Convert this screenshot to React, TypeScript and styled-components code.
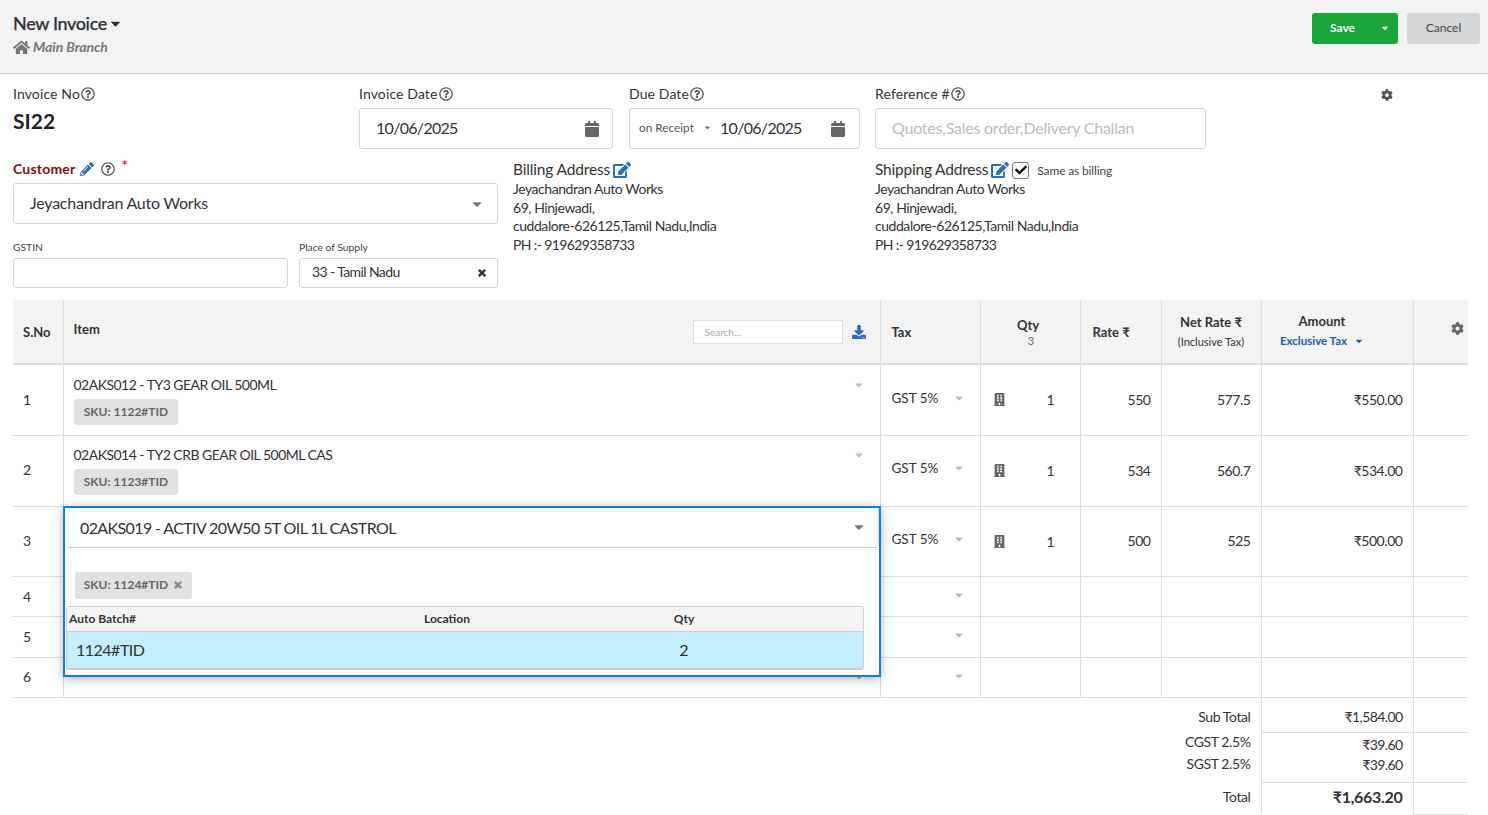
import React from "react";
import styled, { createGlobalStyle } from "styled-components";
import {
  FaBuilding,
  FaCalendar,
  FaCaretDown,
  FaCheck,
  FaCog,
  FaDownload,
  FaEdit,
  FaHome,
  FaPencilAlt,
  FaRegQuestionCircle,
  FaTimes,
} from "react-icons/fa";

const GlobalStyle = createGlobalStyle`
  html, body {
    margin: 0;
    padding: 0;
    background: #fff;
    color: #333;
    font-family: Lato, "Open Sans", sans-serif;
    font-size: 14px;
  }
  * { box-sizing: border-box; }
`;

const rows = [
  { no: 1, item: "02AKS012 - TY3 GEAR OIL 500ML", sku: "SKU: 1122#TID", rate: "550", net: "577.5", amount: "₹550.00", height: 71 },
  { no: 2, item: "02AKS014 - TY2 CRB GEAR OIL 500ML CAS", sku: "SKU: 1123#TID", rate: "534", net: "560.7", amount: "₹534.00", height: 71 },
  { no: 3, rate: "500", net: "525", amount: "₹500.00", height: 70 },
  { no: 4, height: 40 },
  { no: 5, height: 41 },
  { no: 6, height: 40 },
];

const address = ["Jeyachandran Auto Works", "69, Hinjewadi,", "cuddalore-626125,Tamil Nadu,India", "PH :- 919629358733"];

const App = () => {
  return (
    <Page>
      <GlobalStyle />
      <TopBar>
        <div>
          <Title>
            <span>New Invoice</span>
            <FaCaretDown size={15} />
          </Title>
          <Branch>
            <FaHome size={17} />
            Main Branch
          </Branch>
        </div>
        <TopActions>
          <SaveButton>
            <span>Save</span>
            <FaCaretDown size={10} />
          </SaveButton>
          <CancelButton>Cancel</CancelButton>
        </TopActions>
      </TopBar>

      <Content>
        <FirstRow>
          <Field $width={346}>
            <Label>
              Invoice No
              <HelpIcon />
            </Label>
            <InvoiceNo>SI22</InvoiceNo>
          </Field>
          <Field $width={270}>
            <Label>
              Invoice Date
              <HelpIcon />
            </Label>
            <BigInput $width={254}>
              <DateText>10/06/2025</DateText>
              <CalendarIcon />
            </BigInput>
          </Field>
          <Field $width={246}>
            <Label>
              Due Date
              <HelpIcon />
            </Label>
            <DueInput>
              <DueTerm>
                on Receipt <FaCaretDown size={9} />
              </DueTerm>
              <DateText>10/06/2025</DateText>
              <CalendarIcon />
            </DueInput>
          </Field>
          <Field $width={512}>
            <Label>
              Reference #
              <HelpIcon />
            </Label>
            <BigInput $width={331}>
              <Placeholder>Quotes,Sales order,Delivery Challan</Placeholder>
            </BigInput>
          </Field>
          <FormGear>
            <FaCog size={12} />
          </FormGear>
        </FirstRow>

        <SecondRow>
          <CustomerColumn>
            <CustomerLabel>
              Customer
              <FaPencilAlt size={14} color="#2d6db8" />
              <HelpIcon />
              <Required>*</Required>
            </CustomerLabel>
            <CustomerSelect>
              <span>Jeyachandran Auto Works</span>
              <FaCaretDown size={14} color="#777" />
            </CustomerSelect>
            <SubFields>
              <div>
                <SmallLabel>GSTIN</SmallLabel>
                <SmallInput $width={275} />
              </div>
              <div>
                <SmallLabel>Place of Supply</SmallLabel>
                <SmallInput $width={199}>
                  <span>33 - Tamil Nadu</span>
                  <ChunkyTimes size={10} color="#333" />
                </SmallInput>
              </div>
            </SubFields>
          </CustomerColumn>

          <AddressColumn $width={362}>
            <AddressTitle>
              Billing Address
              <FaEdit size={18} color="#2d6db8" />
            </AddressTitle>
            {address.map((line) => (
              <AddressLine key={line}>{line}</AddressLine>
            ))}
          </AddressColumn>

          <AddressColumn $width={400}>
            <ShippingTitle>
              Shipping Address
              <FaEdit size={18} color="#2d6db8" />
              <CheckBox>
                <FaCheck size={12} />
              </CheckBox>
              <SameAs>Same as billing</SameAs>
            </ShippingTitle>
            {address.map((line) => (
              <AddressLine key={line}>{line}</AddressLine>
            ))}
          </AddressColumn>
        </SecondRow>

        <TableWrap>
          <ItemsTable>
            <colgroup>
              <col style={{ width: 50 }} />
              <col style={{ width: 817 }} />
              <col style={{ width: 100 }} />
              <col style={{ width: 100 }} />
              <col style={{ width: 81 }} />
              <col style={{ width: 100 }} />
              <col style={{ width: 152 }} />
              <col />
            </colgroup>
            <thead>
              <tr>
                <HeadCell>S.No</HeadCell>
                <HeadCell>
                  <ItemHead>
                    <ItemHeadLabel>Item</ItemHeadLabel>
                    <SearchBox>Search...</SearchBox>
                    <FaDownload size={14} color="#2d6db8" />
                  </ItemHead>
                </HeadCell>
                <HeadCell $left={11}>Tax</HeadCell>
                <HeadCell $center $right={14}>
                  <HeadTop>Qty</HeadTop>
                  <QtyCount>3</QtyCount>
                </HeadCell>
                <HeadCell $left={12}>Rate ₹</HeadCell>
                <HeadCell $center>
                  <HeadTop>Net Rate ₹</HeadTop>
                  <HeadNote>(Inclusive Tax)</HeadNote>
                </HeadCell>
                <HeadCell $center $right={40}>
                  <AmountTop>Amount</AmountTop>
                  <TaxMode>
                    Exclusive Tax <FaCaretDown size={10} />
                  </TaxMode>
                </HeadCell>
                <HeadCell>
                  <TableGear>
                    <FaCog size={13} />
                  </TableGear>
                </HeadCell>
              </tr>
            </thead>
            <tbody>
              {rows.map((row) => (
                <ItemRow key={row.no} style={{ height: row.height }}>
                  <NoCell>{row.no}</NoCell>
                  <ItemCell>
                    {row.item && (
                      <ItemBody>
                        <ItemName>{row.item}</ItemName>
                        <FaCaretDown size={12} color="#bbb" />
                        <SkuChip>{row.sku}</SkuChip>
                      </ItemBody>
                    )}
                    {row.no === 6 && (
                      <HiddenCaret>
                        <FaCaretDown size={12} color="#bbb" />
                      </HiddenCaret>
                    )}
                  </ItemCell>
                  <TaxCell>
                    <TaxBody>
                      <span>{row.rate ? "GST 5%" : ""}</span>
                      <FaCaretDown size={12} color="#bbb" />
                    </TaxBody>
                  </TaxCell>
                  <Cell>
                    {row.rate && (
                      <QtyBody>
                        <FaBuilding size={13} color="#666" />
                        <span>1</span>
                      </QtyBody>
                    )}
                  </Cell>
                  <NumberCell>{row.rate}</NumberCell>
                  <NumberCell>{row.net}</NumberCell>
                  <NumberCell>{row.amount}</NumberCell>
                  <Cell />
                </ItemRow>
              ))}
              <tr style={{ height: 35 }}>
                <TotalLabel colSpan={6}>
                  <SubTotalText>Sub Total</SubTotalText>
                </TotalLabel>
                <TotalValue>
                  <SubTotalText>₹1,584.00</SubTotalText>
                </TotalValue>
                <Cell />
              </tr>
              <tr style={{ height: 50 }}>
                <TaxLabelCell colSpan={6}>
                  <div>CGST 2.5%</div>
                  <div>SGST 2.5%</div>
                </TaxLabelCell>
                <TaxValueCell>
                  <div>₹39.60</div>
                  <div>₹39.60</div>
                </TaxValueCell>
                <Cell />
              </tr>
              <tr style={{ height: 32 }}>
                <GrandLabel colSpan={6}>Total</GrandLabel>
                <GrandValue>₹1,663.20</GrandValue>
                <Cell />
              </tr>
            </tbody>
          </ItemsTable>

          <ItemEditor>
            <EditorSelect>
              <span>02AKS019 - ACTIV 20W50 5T OIL 1L CASTROL</span>
              <FaCaretDown size={14} color="#777" />
            </EditorSelect>
            <EditorChip>
              SKU: 1124#TID
              <ChunkyTimes size={10} color="#888" />
            </EditorChip>
            <BatchTable>
              <BatchHead>
                <span>Auto Batch#</span>
                <span>Location</span>
                <BatchQty>Qty</BatchQty>
              </BatchHead>
              <BatchRow>
                <BatchName>1124#TID</BatchName>
                <span />
                <BatchQty>2</BatchQty>
              </BatchRow>
            </BatchTable>
          </ItemEditor>
        </TableWrap>
      </Content>
    </Page>
  );
};

export default App;

const Page = styled.div`
  width: 1488px;
  height: 815px;
  overflow: hidden;
`;

const TopBar = styled.div`
  height: 74px;
  padding: 12px 8px 0 13px;
  display: flex;
  justify-content: space-between;
  align-items: flex-start;
  background: #f3f3f3;
  border-bottom: 1px solid #ccc;
`;

const Title = styled.div`
  display: flex;
  align-items: center;
  gap: 1px;
  font-size: 18px;
  line-height: 22px;
  font-weight: 500;
  letter-spacing: -0.36px;
  -webkit-text-stroke: 0.25px #333;
  color: #333;
`;

const Branch = styled.div`
  margin-top: 3px;
  display: flex;
  align-items: center;
  gap: 3px;
  font-size: 14px;
  line-height: 20px;
  font-style: italic;
  font-weight: 700;
  letter-spacing: -0.05px;
  color: #777;
`;

const TopActions = styled.div`
  display: flex;
  gap: 9px;
  padding-top: 1px;
`;

const SaveButton = styled.div`
  width: 86px;
  height: 31px;
  padding: 0 8px 2px 18px;
  display: flex;
  align-items: center;
  justify-content: space-between;
  border-radius: 3px;
  background: #19a538;
  color: #fff;
  font-size: 12px;
  font-weight: 700;
`;

const CancelButton = styled.div`
  width: 73px;
  height: 31px;
  padding-bottom: 2px;
  display: flex;
  align-items: center;
  justify-content: center;
  border-radius: 3px;
  background: #d5d6d8;
  color: #444;
  font-size: 12px;
`;

const Content = styled.div`
  padding: 0 20px 0 13px;
`;

const FirstRow = styled.div`
  display: flex;
  padding-top: 11px;
  position: relative;
`;

const Field = styled.div<{ $width: number }>`
  width: ${(p) => p.$width}px;
  flex: none;
`;

const Label = styled.div`
  display: flex;
  align-items: center;
  height: 18px;
  padding-bottom: 2px;
  font-size: 14px;
  letter-spacing: 0.12px;
  color: #333;
  svg {
    margin-top: 2px;
  }
`;

const HelpIcon = styled(FaRegQuestionCircle)`
  width: 14px;
  height: 14px;
  margin-left: 1px;
  color: #555;
`;

const InvoiceNo = styled.div`
  margin-top: 5px;
  font-size: 21px;
  line-height: 26px;
  font-weight: 700;
  color: #222;
`;

const BigInput = styled.div<{ $width: number }>`
  width: ${(p) => p.$width}px;
  height: 41px;
  margin-top: 5px;
  padding: 0 13px 2px 16px;
  display: flex;
  align-items: center;
  justify-content: space-between;
  border: 1px solid #d5d5d5;
  border-radius: 3px;
  font-size: 16px;
  color: #333;
`;

const DueInput = styled(BigInput).attrs({ $width: 231 })`
  padding: 0 14px 2px 9px;
  justify-content: flex-start;
  > svg {
    margin-left: auto;
  }
`;

const DateText = styled.span`
  letter-spacing: -0.7px;
`;

const DueTerm = styled.span`
  width: 81px;
  flex: none;
  display: flex;
  align-items: center;
  gap: 9px;
  font-size: 11.8px;
  color: #555;
  svg {
    color: #777;
  }
`;

const CalendarIcon = styled(FaCalendar)`
  width: 14px;
  height: 16px;
  margin-top: 2px;
  color: #666;
`;

const Placeholder = styled.span`
  letter-spacing: -0.23px;
  color: #bbb;
`;

const FormGear = styled.div`
  position: absolute;
  left: 1368px;
  top: 13px;
  color: #555;
`;

const SecondRow = styled.div`
  display: flex;
  margin-top: 11px;
`;

const CustomerColumn = styled.div`
  width: 500px;
  flex: none;
`;

const CustomerLabel = styled.div`
  display: flex;
  align-items: center;
  gap: 5px;
  height: 18px;
  padding-bottom: 2px;
  font-size: 14px;
  font-weight: 700;
  letter-spacing: 0.2px;
  color: #7a1010;
  svg {
    margin-top: 2px;
  }
  svg:nth-of-type(2) {
    margin-left: 2px;
  }
`;

const Required = styled.span`
  margin: -6px 0 0 1px;
  font-size: 15px;
  color: #e8303a;
`;

const CustomerSelect = styled.div`
  width: 485px;
  height: 41px;
  margin-top: 5px;
  padding: 0 13px 2px 16px;
  display: flex;
  align-items: center;
  justify-content: space-between;
  border: 1px solid #d5d5d5;
  border-radius: 3px;
  font-size: 16px;
  letter-spacing: -0.22px;
  svg {
    margin-top: 2px;
  }
`;

const SubFields = styled.div`
  display: flex;
  gap: 11px;
  margin-top: 17px;
`;

const SmallLabel = styled.div`
  height: 17px;
  font-size: 10.3px;
  line-height: 13px;
  color: #444;
`;

const SmallInput = styled.div<{ $width: number }>`
  width: ${(p) => p.$width}px;
  height: 30px;
  padding: 0 10px 3px 12px;
  display: flex;
  align-items: center;
  justify-content: space-between;
  border: 1px solid #d5d5d5;
  border-radius: 3px;
  font-size: 14px;
  letter-spacing: -0.6px;
  svg {
    margin-top: 3px;
  }
`;

const ChunkyTimes = styled(FaTimes)`
  stroke: currentColor;
  stroke-width: 50;
`;

const AddressColumn = styled.div<{ $width: number }>`
  width: ${(p) => p.$width}px;
  flex: none;
`;

const AddressTitle = styled.div`
  display: flex;
  align-items: center;
  gap: 3px;
  height: 20px;
  padding-bottom: 2px;
  font-size: 15.5px;
  letter-spacing: -0.15px;
  color: #333;
  svg {
    margin-top: 2px;
  }
`;

const ShippingTitle = styled(AddressTitle)`
  letter-spacing: -0.2px;
`;

const AddressLine = styled.div`
  font-size: 14px;
  line-height: 18.7px;
  letter-spacing: -0.45px;
  color: #333;
  &:last-child {
    letter-spacing: -0.62px;
  }
`;

const CheckBox = styled.span`
  width: 17px;
  height: 17px;
  margin-top: 2px;
  display: flex;
  align-items: center;
  justify-content: center;
  border: 1px solid #777;
  border-radius: 3px;
  color: #111;
  svg {
    margin-top: 0;
  }
`;

const SameAs = styled.span`
  margin: 2px 0 0 5px;
  font-size: 12px;
  letter-spacing: -0.15px;
  color: #444;
`;

const TableWrap = styled.div`
  position: relative;
  margin-top: 12px;
  width: 1455px;
`;

const ItemsTable = styled.table`
  width: 1455px;
  table-layout: fixed;
  border-collapse: collapse;
`;

const HeadCell = styled.th<{ $center?: boolean; $left?: number; $right?: number }>`
  height: 64px;
  padding: 0 ${(p) => p.$right ?? 10}px 0 ${(p) => p.$left ?? 10}px;
  position: relative;
  background: #f3f3f3;
  border-right: 1px solid #ddd;
  border-bottom: 2px solid #ddd;
  font-size: 13px;
  font-weight: 700;
  color: #333;
  text-align: ${(p) => (p.$center ? "center" : "left")};
  &:last-child {
    border-right: none;
  }
`;

const ItemHead = styled.div`
  display: flex;
  align-items: center;
  gap: 9px;
  padding-right: 4px;
`;

const ItemHeadLabel = styled.span`
  margin: -6px auto 0 0;
`;

const SearchBox = styled.div`
  width: 150px;
  height: 24px;
  padding-left: 11px;
  display: flex;
  align-items: center;
  border: 1px solid #ddd;
  background: #fff;
  font-size: 10px;
  font-weight: 400;
  color: #aaa;
`;

const HeadTop = styled.div`
  line-height: 20px;
`;

const AmountTop = styled(HeadTop)`
  margin-top: -2px;
`;

const QtyCount = styled.div`
  margin-top: -1px;
  padding-left: 6px;
  font-size: 11px;
  font-weight: 400;
  line-height: 14px;
  color: #666;
`;

const HeadNote = styled.div`
  font-size: 11px;
  font-weight: 400;
  line-height: 20px;
`;

const TaxMode = styled.div`
  display: flex;
  align-items: center;
  justify-content: center;
  gap: 7px;
  margin-top: 1px;
  font-size: 11.5px;
  line-height: 18px;
  color: #1c5bae;
`;

const TableGear = styled.div`
  position: absolute;
  top: 22px;
  right: 4px;
  color: #666;
`;

const Cell = styled.td`
  padding: 0 10px;
  border-right: 1px solid #ddd;
  border-bottom: 1px solid #ddd;
  font-size: 13.5px;
  color: #333;
  &:last-child {
    border-right: none;
  }
`;

const NoCell = styled(Cell)`
  font-size: 14px;
`;

const TaxCell = styled(Cell)`
  padding-left: 11px;
`;

const ItemCell = styled(Cell)`
  position: relative;
  vertical-align: top;
  padding-top: 12px;
`;

const ItemBody = styled.div`
  display: grid;
  grid-template-columns: 1fr auto;
  align-items: center;
  padding-right: 5px;
`;

const ItemName = styled.span`
  font-size: 14px;
  line-height: 16px;
  letter-spacing: -0.52px;
`;

const SkuChip = styled.span`
  grid-column: 1 / -1;
  width: 104px;
  height: 26px;
  margin-top: 6px;
  padding: 0 0 1px 1px;
  display: flex;
  align-items: center;
  justify-content: center;
  border-radius: 3px;
  background: #e0e1e1;
  font-size: 12px;
  font-weight: 700;
  color: #666;
`;

const HiddenCaret = styled.div`
  position: absolute;
  right: 15px;
  top: 12px;
`;

const TaxBody = styled.div`
  display: flex;
  align-items: center;
  justify-content: space-between;
  height: 16px;
  padding-right: 5px;
  margin-top: -3px;
`;

const QtyBody = styled.div`
  display: flex;
  align-items: center;
  justify-content: space-between;
  padding: 0 15px 0 2px;
  font-size: 14px;
`;

const NumberCell = styled(Cell)`
  text-align: right;
  font-size: 14px;
  letter-spacing: -0.45px;
`;

// the source rows sit a pixel higher from the second row on
const ItemRow = styled.tr`
  &:nth-child(2) ${NoCell}, &:nth-child(3) ${NoCell}, &:nth-child(6) ${NoCell} {
    padding-bottom: 2px;
  }
  &:nth-child(2) ${TaxCell}, &:nth-child(3) ${TaxCell} {
    padding-bottom: 2px;
  }
  &:nth-child(3) ${NumberCell} {
    padding-bottom: 2px;
  }
  &:nth-child(2) ${ItemCell} {
    padding-top: 11px;
  }
`;

const TotalLabel = styled.td`
  padding: 0 10px;
  text-align: right;
  border-right: 1px solid #ddd;
  font-size: 14px;
  letter-spacing: -0.4px;
  color: #333;
`;

const GrandLabel = styled(TotalLabel)`
  padding-bottom: 4px;
`;

const SubTotalText = styled.div`
  padding-top: 4px;
`;

const TaxLabelCell = styled(TotalLabel)`
  vertical-align: top;
  line-height: 22px;
  div:first-child {
    margin-top: -1px;
  }
`;

const TotalValue = styled(NumberCell)`
  letter-spacing: -0.6px;
`;

const TaxValueCell = styled(TotalValue)`
  vertical-align: top;
  padding-top: 2px;
  line-height: 20px;
`;

const GrandValue = styled(NumberCell)`
  border-bottom: none;
  padding-bottom: 3px;
  font-size: 16px;
  font-weight: 700;
  letter-spacing: -0.3px;
`;

const ItemEditor = styled.div`
  position: absolute;
  left: 50px;
  top: 206px;
  width: 818px;
  height: 171px;
  padding: 1px 0 0 1px;
  background: #fff;
  border: 2px solid #0a7fdb;
  box-shadow: 0 2px 10px rgba(0, 0, 0, 0.3);
`;

const EditorSelect = styled.div`
  height: 39px;
  padding: 0 12px 2px 14px;
  display: flex;
  align-items: center;
  justify-content: space-between;
  border-bottom: 1px solid #ccc;
  border-right: 1px solid #ddd;
  border-radius: 0 0 3px 3px;
  font-size: 16px;
  letter-spacing: -0.62px;
  color: #333;
`;

const EditorChip = styled.div`
  width: 117px;
  height: 27px;
  margin: 24px 0 0 9px;
  padding-bottom: 2px;
  display: flex;
  align-items: center;
  justify-content: center;
  gap: 5px;
  border-radius: 3px;
  background: #e0e1e1;
  font-size: 12px;
  font-weight: 700;
  color: #666;
`;

const BatchTable = styled.div`
  width: 798px;
  margin-top: 7px;
  border: 1px solid #d0d0d0;
  border-bottom: 2px solid #ccc;
  border-radius: 3px;
`;

const BatchHead = styled.div`
  height: 25px;
  padding: 0 0 2px 2px;
  display: grid;
  grid-template-columns: 355px 210px 100px 1fr;
  align-items: center;
  background: #f3f3f3;
  border-bottom: 1px solid #ccc;
  font-size: 12px;
  font-weight: 700;
  color: #333;
`;

const BatchRow = styled(BatchHead)`
  height: 36px;
  background: #c4eefe;
  border-bottom: none;
  font-size: 16px;
  font-weight: 400;
`;

const BatchName = styled.span`
  padding-left: 7px;
  letter-spacing: -0.5px;
`;

const BatchQty = styled.span`
  text-align: center;
`;
